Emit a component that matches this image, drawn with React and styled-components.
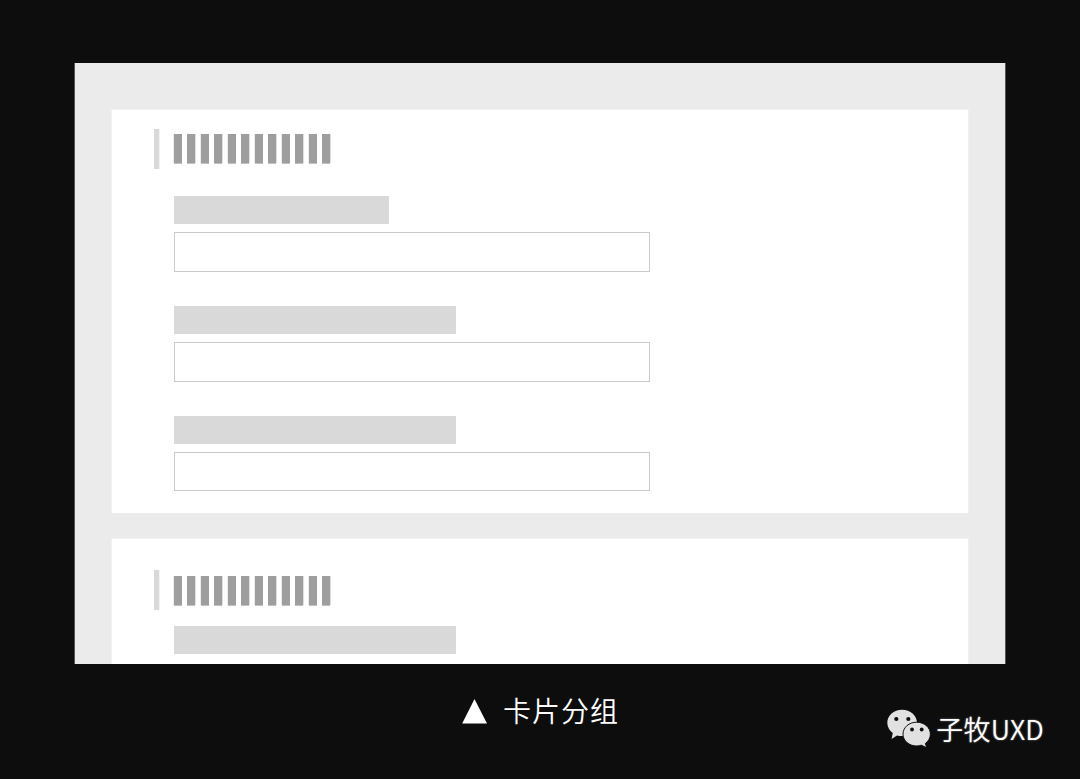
import React from "react";
import styled, {createGlobalStyle} from "styled-components";

const BAR_COUNT = 12;

const firstGroup = [
    {width: 215, labelHeight: 28, inputHeight: 40, bottom: 34},
    {width: 282, labelHeight: 28, inputHeight: 40, bottom: 34},
    {width: 282, labelHeight: 28, inputHeight: 39, bottom: 0},
];

const Heading = ({space, offset = 0}) => (
    <StyledHeading $space={space}>
        <StyledAccent/>
        <StyledBars $offset={offset}>
            {Array.from({length: BAR_COUNT}, (_, i) => <StyledBar key={i}/>)}
        </StyledBars>
    </StyledHeading>
);

const WechatIcon = () => (
    <StyledIcon viewBox="0 0 46 42" aria-hidden="true">
        <path
            fill="#e1e1e1"
            d="M17 4.7C8.7 4.7 2.3 10.4 2.3 17.8c0 4.2 2.1 7.7 5.5 10.2L6.6 34l5.4-3.6c1.7.4 3.2.6 5 .6 8.4 0 15-5.9 15-13.2S25.4 4.7 17 4.7z"
        />
        <path
            fill="#e1e1e1"
            stroke="#0d0d0d"
            strokeWidth="1"
            d="M31.7 17.2c-7.6 0-13.7 5.2-13.7 11.9s6.1 11.9 13.7 11.9c1.6 0 3.2-.3 4.7-.8l5.3 2.6-1.3-4.4c3-2.2 5-5.4 5-9.3 0-6.7-6.1-11.9-13.7-11.9z"
        />
        <g fill="#0d0d0d">
            <circle cx="11.3" cy="14" r="2.1"/>
            <circle cx="23.3" cy="14" r="2.1"/>
            <circle cx="27" cy="24.5" r="1.9"/>
            <circle cx="36.7" cy="24.5" r="1.9"/>
        </g>
    </StyledIcon>
);

const App = () => {
    return (
        <>
            <GlobalStyle/>
            <StyledPage>
                <StyledPanel>
                    <StyledCard $height={403} $top={19}>
                        <Heading space={27}/>
                        {firstGroup.map((item, index) => (
                            <StyledField key={index} $bottom={item.bottom}>
                                <StyledLabel $width={item.width} $height={item.labelHeight}/>
                                <StyledInput $height={item.inputHeight}/>
                            </StyledField>
                        ))}
                    </StyledCard>
                    <StyledCard $height={150} $top={31}>
                        <Heading space={16} offset={1}/>
                        <StyledLabel $width={282} $height={28}/>
                    </StyledCard>
                </StyledPanel>
                <StyledFooter>
                    <StyledCaption>
                        <StyledTriangle viewBox="0 0 25 25" aria-hidden="true">
                            <path fill="#fff" d="M12.5 0 25 24.4H.2z"/>
                        </StyledTriangle>
                        <StyledCaptionText>卡片分组</StyledCaptionText>
                    </StyledCaption>
                    <StyledAuthor>
                        <WechatIcon/>
                        <StyledAuthorName>子牧UXD</StyledAuthorName>
                    </StyledAuthor>
                </StyledFooter>
            </StyledPage>
        </>
    );
};

export default App;

const GlobalStyle = createGlobalStyle`
    * {
        box-sizing: border-box;
    }

    body {
        margin: 0;
        background-color: #0d0d0d;
        font-family: "Noto Sans CJK SC", sans-serif;
    }
`;

const StyledPage = styled.div`
    display: flex;
    flex-direction: column;
    width: 1080px;
    height: 779px;
    padding-top: 63px;
    overflow: hidden;
    background-color: #0d0d0d;
`;

const StyledPanel = styled.div`
    display: flex;
    flex-direction: column;
    flex: none;
    gap: 26px;
    width: 930px;
    height: 601px;
    margin-left: 75px;
    padding: 47px 37px 0;
    overflow: hidden;
    background-color: #ebebeb;
    box-shadow: -1px 0 #555, 1px 0 #555;
`;

const StyledCard = styled.section`
    flex: none;
    height: ${({$height}) => $height}px;
    padding: ${({$top}) => $top}px 0 0 62px;
    background-color: #fff;
    box-shadow: -1px -1px #f2f2f2, 1px -1px #f0f0f0;
`;

const StyledHeading = styled.div`
    display: flex;
    gap: 14.9px;
    height: 40px;
    margin: 0 0 ${({$space}) => $space}px -20px;
`;

const StyledAccent = styled.div`
    width: 5px;
    height: 40px;
    background-color: #d9d9d9;
    box-shadow: 1px 0 #f3f3f3;
`;

const StyledBars = styled.div`
    display: flex;
    gap: 5.5px;
    padding-top: ${({$offset}) => 5 + $offset}px;
`;

const StyledBar = styled.span`
    width: 8px;
    height: 29px;
    background-color: #9e9e9e;
    box-shadow: 0 1px #c0c0c0, -1px 0 #ececec;

    &:nth-child(even) {
        box-shadow: 0 1px #c0c0c0, 1px 0 #dedede;
    }
`;

const StyledField = styled.div`
    margin-bottom: ${({$bottom}) => $bottom}px;
`;

const StyledLabel = styled.div`
    width: ${({$width}) => $width}px;
    height: ${({$height}) => $height}px;
    background-color: #d9d9d9;
`;

const StyledInput = styled.div`
    width: 476px;
    height: ${({$height}) => $height}px;
    margin-top: 8px;
    border: 1px solid #cacaca;
    background-color: #fff;
`;

const StyledFooter = styled.footer`
    display: grid;
    grid-template-columns: 462px 1fr auto;
    flex: 1;
    padding-right: 36px;
`;

const StyledCaption = styled.div`
    display: flex;
    grid-column: 2;
    align-items: center;
    align-self: start;
    height: 40px;
    margin-top: 26px;
`;

const StyledTriangle = styled.svg`
    width: 25px;
    height: 25px;
    margin-top: 3px;
`;

const StyledCaptionText = styled.span`
    margin-left: 16px;
    font-size: 28px;
    font-weight: 350;
    line-height: 40px;
    letter-spacing: 1px;
    color: #fff;
`;

const StyledAuthor = styled.div`
    display: flex;
    align-items: flex-start;
    align-self: start;
    height: 46px;
    margin-top: 41px;
`;

const StyledIcon = styled.svg`
    width: 46px;
    height: 42px;
`;

const StyledAuthorName = styled.span`
    margin-left: 5px;
    padding-top: 2px;
    font-size: 27px;
    font-weight: 350;
    line-height: 44px;
    letter-spacing: .2px;
    color: #fff;
    white-space: nowrap;
    text-shadow: 0 0 2px rgba(255, 255, 255, .5);
`;
